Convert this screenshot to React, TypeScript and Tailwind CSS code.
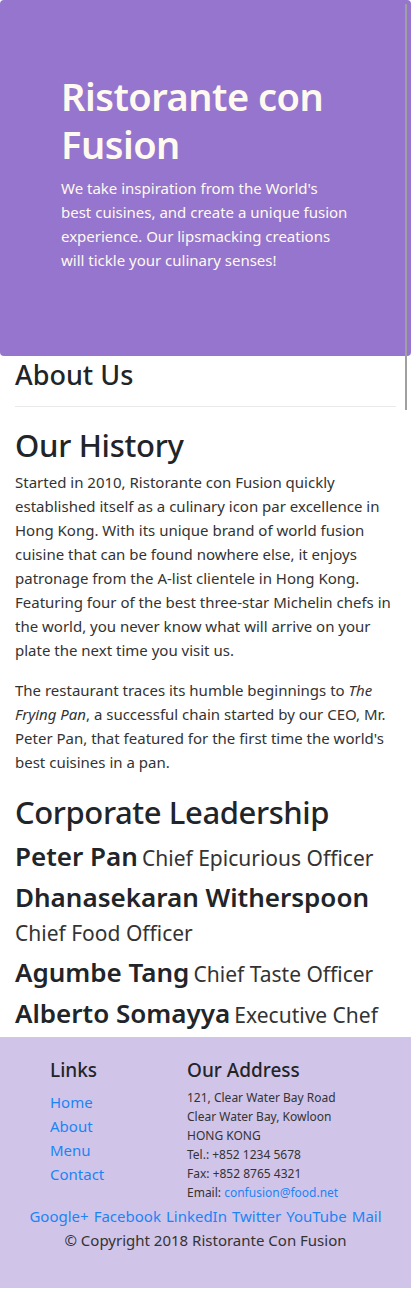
import React from "react";

const leaders = [
  { name: "Peter Pan", title: "Chief Epicurious Officer" },
  { name: "Dhanasekaran Witherspoon", title: "Chief Food Officer" },
  { name: "Agumbe Tang", title: "Chief Taste Officer" },
  { name: "Alberto Somayya", title: "Executive Chef" },
];

const socials = ["Google+", "Facebook", "LinkedIn", "Twitter", "YouTube", "Mail"];

export default function App() {
  return (
    <div
      className="relative w-[412px] bg-white text-[#212529]"
      style={{ fontFamily: '"Noto Sans", "Open Sans", sans-serif' }}
    >
      {/* jumbotron */}
      <header className="w-[411px] h-[356px] rounded bg-[#9575CD] pt-[72px] pl-[61px]">
        <h1 className="w-[300px] text-[38px] leading-[48px] font-semibold tracking-[-0.5px] text-[#FFFAF0]">
          Ristorante con Fusion
        </h1>
        <p className="mt-2 w-[288px] text-[15px] leading-6 text-[#FFFAF0]">
          We take inspiration from the World's best cuisines, and create a unique fusion
          experience. Our lipsmacking creations will tickle your culinary senses!
        </p>
      </header>
      <div className="absolute right-[5px] top-[4px] h-[406px] w-[2px] bg-[#a0a0a0]" />

      <main className="px-[15px]">
        <h2 className="mt-[2px] text-[27px] leading-[34px] font-medium">About Us</h2>
        <hr className="mt-[14px] mr-[1px] border-t border-[#e9e9e9]" />

        <h2 className="mt-[19px] text-[31px] leading-[38px] font-medium tracking-[-0.3px]">
          Our History
        </h2>
        <p className="mt-[6px] text-[15px] leading-6 text-[#333]">
          Started in 2010, Ristorante con Fusion quickly established itself as a culinary icon
          par excellence in Hong Kong. With its unique brand of world fusion cuisine that can be
          found nowhere else, it enjoys patronage from the A-list clientele in Hong Kong.
          Featuring four of the best three-star Michelin chefs in the world, you never know what
          will arrive on your plate the next time you visit us.
        </p>
        <p className="mt-4 text-[15px] leading-6 text-[#333]">
          The restaurant traces its humble beginnings to <em>The Frying Pan</em>, a successful
          chain started by our CEO, Mr. Peter Pan, that featured for the first time the world's
          best cuisines in a pan.
        </p>

        <h2 className="mt-[19px] text-[31px] leading-[38px] font-medium tracking-[-0.4px]">
          Corporate Leadership
        </h2>
        <dl className="mt-[9px]">
          {leaders.map((l) => (
            <div key={l.name} className="mb-[5px] leading-[32px] last:mb-[4px]">
              <dt className="inline text-[26px] font-semibold">{l.name}</dt>{" "}
              <dd className="inline text-[21px] text-[#333]">{l.title}</dd>
            </div>
          ))}
        </dl>
      </main>

      <footer className="w-[411px] h-[251px] bg-[#D1C4E9] pt-[21px]">
        <div className="flex">
          <div className="pl-[50px] w-[187px]">
            <h5 className="text-[19px] leading-6 font-medium">Links</h5>
            <ul className="mt-[8px] text-[15px] leading-6 text-[#1a84f5]">
              <li>Home</li>
              <li>About</li>
              <li>Menu</li>
              <li>Contact</li>
            </ul>
          </div>
          <div>
            <h5 className="text-[19px] leading-6 font-medium">Our Address</h5>
            <address className="mt-[6px] not-italic text-[12px] leading-[19px] text-[#333]">
              121, Clear Water Bay Road
              <br />
              Clear Water Bay, Kowloon
              <br />
              HONG KONG
              <br />
              Tel.: +852 1234 5678
              <br />
              Fax: +852 8765 4321
              <br />
              Email: <span className="text-[#1a84f5]">confusion@food.net</span>
            </address>
          </div>
        </div>
        <div className="mt-[2px] flex justify-center gap-[5px] text-[15px] leading-6 text-[#1a84f5]">
          {socials.map((s) => (
            <span key={s}>{s}</span>
          ))}
        </div>
        <p className="text-center text-[15px] leading-6 text-[#333]">
          © Copyright 2018 Ristorante Con Fusion
        </p>
      </footer>
      <div className="h-[3px]" />
    </div>
  );
}
